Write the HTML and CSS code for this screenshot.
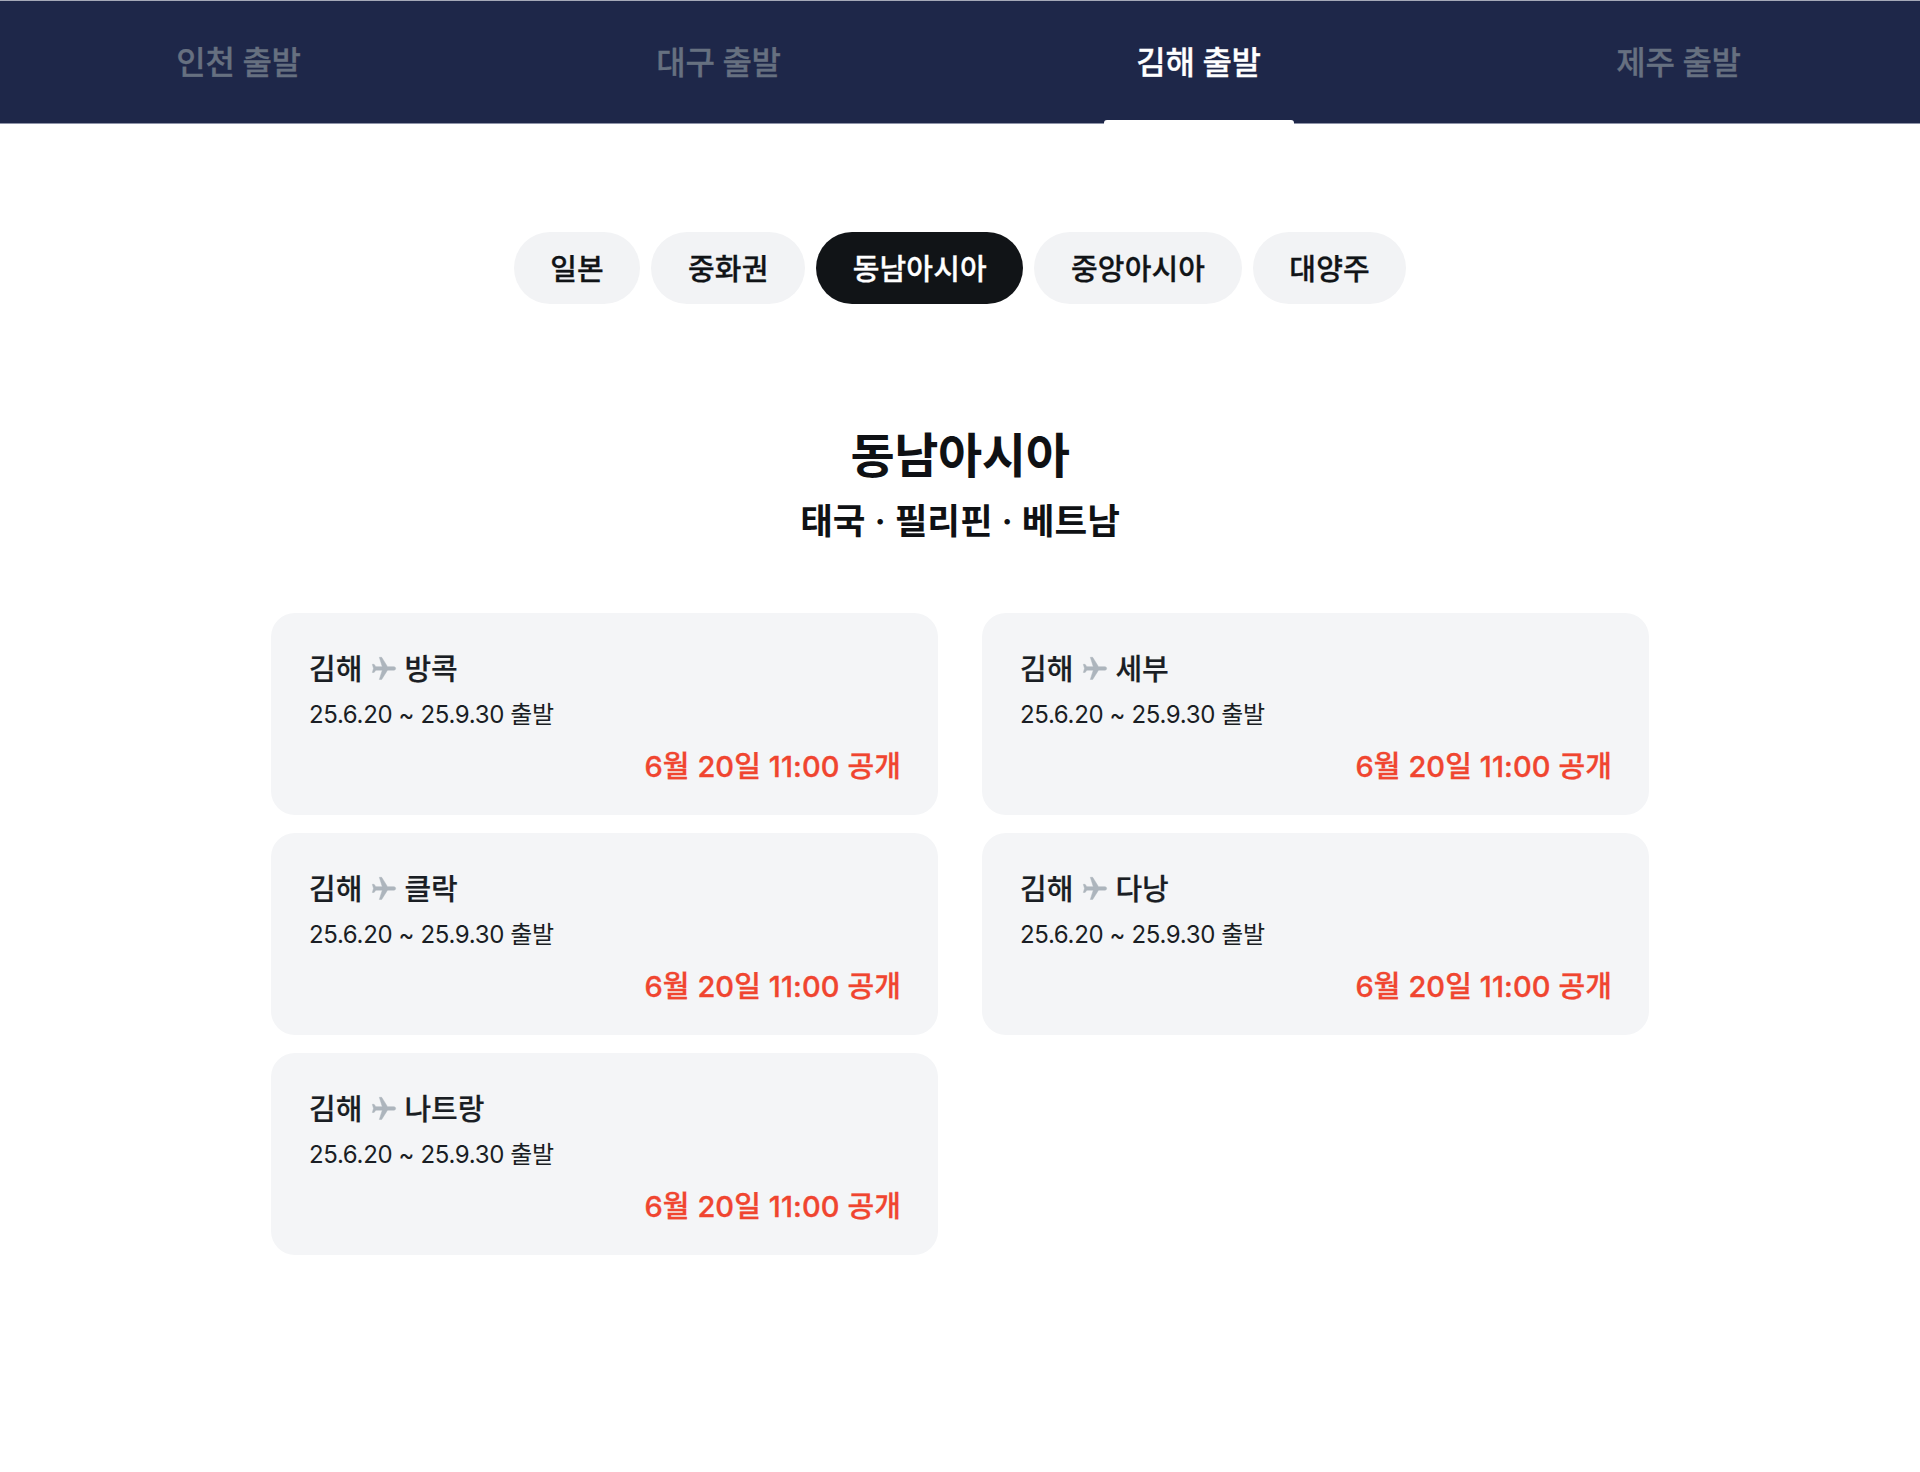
FILE: index.html
```html
<!DOCTYPE html>
<html lang="ko">
<head>
<meta charset="utf-8">
<title>출발 노선</title>
<link rel="stylesheet" href="styles.css">
</head>
<body>
<svg class="sprite" width="0" height="0" aria-hidden="true"><symbol id="plane" viewBox="0 0 24 24"><path transform="rotate(90 12 12)" d="M21 16v-2l-8-5V3.5c0-.83-.67-1.5-1.5-1.5S10 2.67 10 3.5V9l-8 5v2l8-2.5V19l-2 1.5V22l3.5-1 3.5 1v-1.5L13 19v-5.5l8 2.5z"/></symbol></svg>
<nav class="tabs">
  <a class="tab">인천 출발</a>
  <a class="tab">대구 출발</a>
  <a class="tab is-active">김해 출발</a>
  <a class="tab">제주 출발</a>
</nav>
<main class="content">
  <div class="pills">
    <a class="pill">일본</a>
    <a class="pill">중화권</a>
    <a class="pill is-active">동남아시아</a>
    <a class="pill">중앙아시아</a>
    <a class="pill">대양주</a>
  </div>
  <h1 class="title">동남아시아</h1>
  <p class="subtitle">태국 · 필리핀 · 베트남</p>
  <div class="cards">
    <article class="card">
      <div class="route">김해 <svg class="plane"><use href="#plane"/></svg> 방콕</div>
      <div class="dates">25.6.20 ~ 25.9.30 출발</div>
      <div class="open">6월 20일 11:00 공개</div>
    </article>
    <article class="card">
      <div class="route">김해 <svg class="plane"><use href="#plane"/></svg> 세부</div>
      <div class="dates">25.6.20 ~ 25.9.30 출발</div>
      <div class="open">6월 20일 11:00 공개</div>
    </article>
    <article class="card">
      <div class="route">김해 <svg class="plane"><use href="#plane"/></svg> 클락</div>
      <div class="dates">25.6.20 ~ 25.9.30 출발</div>
      <div class="open">6월 20일 11:00 공개</div>
    </article>
    <article class="card">
      <div class="route">김해 <svg class="plane"><use href="#plane"/></svg> 다낭</div>
      <div class="dates">25.6.20 ~ 25.9.30 출발</div>
      <div class="open">6월 20일 11:00 공개</div>
    </article>
    <article class="card">
      <div class="route">김해 <svg class="plane"><use href="#plane"/></svg> 나트랑</div>
      <div class="dates">25.6.20 ~ 25.9.30 출발</div>
      <div class="open">6월 20일 11:00 공개</div>
    </article>
  </div>
</main>
</body>
</html>
```
FILE: styles.css
```css
* { box-sizing: border-box; }
html, body { margin: 0; padding: 0; background: #fff; }
body {
  font-family: Inter, "Noto Sans CJK KR", sans-serif;
  color: #111417;
  min-height: 1472px;
}
.sprite { position: absolute; }
.tabs {
  display: grid;
  grid-template-columns: repeat(4, 1fr);
  height: 124px;
  background: #1e2749;
  border-top: 1px solid #a5a9b8;
  border-bottom: 1px solid #8e93a8;
}
.tab {
  position: relative;
  display: flex;
  align-items: center;
  justify-content: center;
  padding: 0 3px 4px 0;
  font-size: 32px;
  font-weight: 500;
  letter-spacing: -0.4px;
  -webkit-text-stroke: 0.3px currentColor;
  color: #667080;
}
.tab.is-active { color: #fff; }
.tab.is-active::after {
  content: "";
  position: absolute;
  bottom: -1px;
  left: 50%;
  width: 190px;
  height: 4px;
  margin-left: -96px;
  background: #fff;
  border-radius: 3px 3px 0 0;
}
.content {
  width: 1378px;
  margin: 0 auto;
  padding-top: 108px;
}
.pills {
  display: flex;
  justify-content: center;
  gap: 11px;
}
.pill {
  display: flex;
  align-items: center;
  height: 72px;
  padding: 0 36.6px 2px;
  border-radius: 36px;
  background: #f2f3f5;
  font-size: 29px;
  letter-spacing: 0.15px;
  font-weight: 500;
  -webkit-text-stroke: 0.3px currentColor;
  color: #111417;
}
.pill.is-active { background: #111417; color: #fff; }
.title {
  margin: 117px 0 0;
  text-align: center;
  font-size: 48px;
  letter-spacing: -0.4px;
  line-height: 70px;
  font-weight: 700;
  color: #0f1114;
}
.subtitle {
  margin: 1px 0 0;
  text-align: center;
  font-size: 35.5px;
  line-height: 60px;
  font-weight: 600;
  color: #0f1114;
}
.cards {
  display: grid;
  grid-template-columns: repeat(2, 667px);
  justify-content: space-between;
  gap: 18px 44px;
  margin-top: 61px;
}
.card {
  height: 202px;
  padding: 36px 38px 0;
  border-radius: 24px;
  background: #f4f5f7;
}
.route {
  display: flex;
  align-items: center;
  gap: 7px;
  font-size: 29px;
  line-height: 42px;
  font-weight: 500;
  -webkit-text-stroke: 0.2px currentColor;
  color: #1a1e24;
}
.plane {
  width: 28px;
  height: 28px;
  margin: -2px -1px 0 1px;
  fill: #adb5bd;
  stroke: #adb5bd;
  stroke-width: 0.4px;
}
.dates {
  margin-top: 6px;
  font-size: 24px;
  line-height: 36px;
  font-weight: 400;
  letter-spacing: -0.35px;
  color: #1a1e24;
}
.open {
  margin-top: 13px;
  margin-right: -1px;
  text-align: right;
  font-size: 29px;
  letter-spacing: 0.1px;
  line-height: 42px;
  font-weight: 500;
  -webkit-text-stroke: 0.35px currentColor;
  color: #f04530;
}
```
